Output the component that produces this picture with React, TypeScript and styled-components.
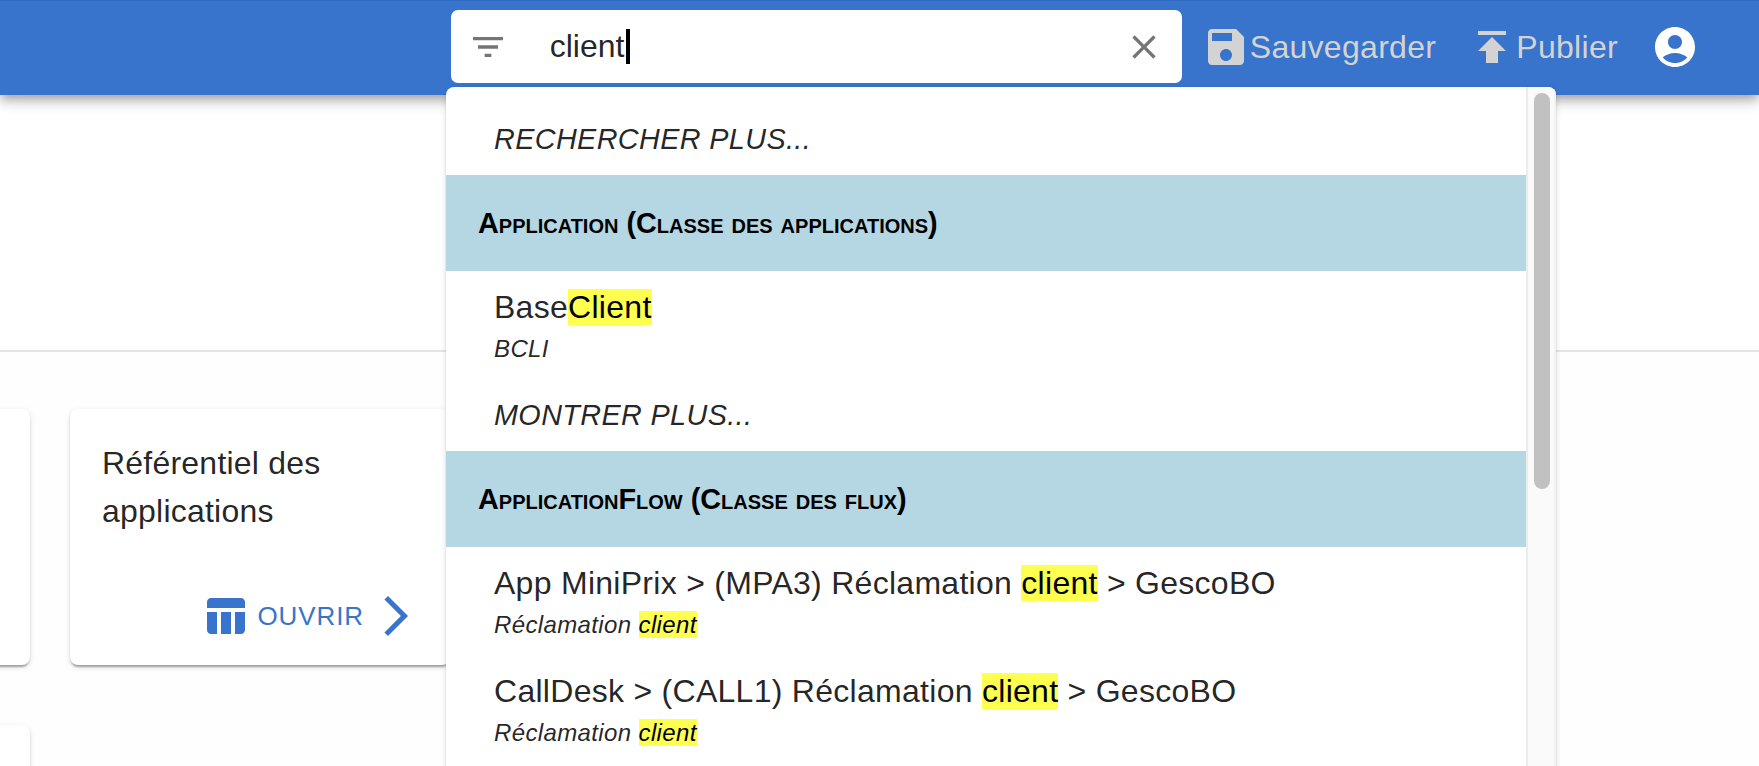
import React from "react";
import styled, { createGlobalStyle } from "styled-components";

const BLUE = "#3874cb";

const GlobalStyle = createGlobalStyle`
  html, body {
    margin: 0;
    height: 100%;
    overflow: hidden;
    background: #fff;
    font-family: "Liberation Sans", Arial, sans-serif;
  }
`;

const Page = styled.div`
  position: relative;
  height: 766px;
  overflow: hidden;
  background: #fff;
`;

const Header = styled.header`
  position: relative;
  z-index: 2;
  box-sizing: border-box;
  height: 95px;
  display: flex;
  align-items: center;
  justify-content: flex-end;
  gap: 32px;
  padding: 0 60px 1px 0;
  background: ${BLUE};
  box-shadow: inset 0 1px 0 #2f69c0, 0 4px 8px -2px rgba(0, 0, 0, 0.2),
    0 8px 10px 0 rgba(0, 0, 0, 0.14), 0 2px 20px 0 rgba(0, 0, 0, 0.12);
`;

const Search = styled.div`
  box-sizing: border-box;
  width: 737px;
  height: 79px;
  margin: 0 -15px 1px 0;
  display: flex;
  align-items: center;
  padding: 0 18px 0 17px;
  background: #fff;
  border: 3px solid ${BLUE};
  border-radius: 10px;
`;

const SearchText = styled.div`
  flex: 1;
  display: flex;
  align-items: center;
  margin-left: 42px;
  font-size: 32px;
  color: rgba(0, 0, 0, 0.87);
`;

const Caret = styled.span`
  width: 3.5px;
  height: 35px;
  margin-left: 2px;
  background: #000;
`;

const Glyph = styled.svg<{ $size: number; $color: string }>`
  flex: none;
  display: block;
  width: ${(p) => p.$size}px;
  height: ${(p) => p.$size}px;
  fill: ${(p) => p.$color};
`;

const Icon = ({ d, size = 48, color }: { d: string; size?: number; color: string }) => (
  <Glyph viewBox="0 0 24 24" $size={size} $color={color}>
    <path d={d} />
  </Glyph>
);

const HeaderAction = styled.div`
  display: flex;
  align-items: center;
  font-size: 32px;
  letter-spacing: 0.3px;
  color: lightgray;
`;

const Account = styled.div`
  margin-left: 1px;
`;

const Body = styled.main`
  position: relative;
`;

const TopPanel = styled.div`
  height: 255px;
  background: #fff;
  border-bottom: 2px solid #e4e4e4;
`;

const CardGrid = styled.div`
  display: flex;
  flex-direction: column;
  gap: 60px;
  margin-left: -350px;
  padding-top: 57px;
  background: #fefefe;
`;

const CardRow = styled.div`
  display: flex;
  gap: 40px;
`;

const Card = styled.div`
  box-sizing: border-box;
  width: 380px;
  height: 256px;
  display: flex;
  flex-direction: column;
  justify-content: space-between;
  padding: 30px 30px 25px 32px;
  background: #fff;
  border-radius: 8px;
  box-shadow: 0 4px 2px -2px rgba(0, 0, 0, 0.2), 0 2px 2px 0 rgba(0, 0, 0, 0.14),
    0 2px 6px 0 rgba(0, 0, 0, 0.12);
`;

const CardTitle = styled.div`
  font-size: 32px;
  line-height: 48px;
  letter-spacing: 0.22px;
  color: rgba(0, 0, 0, 0.87);
`;

const CardActions = styled.div`
  display: flex;
  align-items: center;
  justify-content: flex-end;
`;

const OpenLabel = styled.span`
  margin: 0 8px;
  font-size: 26px;
  letter-spacing: 0.9px;
  color: ${BLUE};
`;

const Dropdown = styled.div`
  position: absolute;
  z-index: 3;
  top: 87px;
  left: 446px;
  width: 1110px;
  height: 720px;
  display: flex;
  overflow: hidden;
  background: #fff;
  border-radius: 8px;
  box-shadow: 0 4px 2px -2px rgba(0, 0, 0, 0.2), 0 2px 2px 0 rgba(0, 0, 0, 0.14),
    0 2px 6px 0 rgba(0, 0, 0, 0.12);
`;

const List = styled.ul`
  flex: 1;
  min-width: 0;
  margin: 0;
  padding: 16px 0 0;
  list-style: none;
`;

const MoreRow = styled.li`
  height: 72px;
  display: flex;
  align-items: center;
  padding-left: 48px;
  font-size: 28.8px;
  font-style: italic;
  letter-spacing: 0.37px;
  text-transform: uppercase;
  color: rgba(0, 0, 0, 0.87);
`;

const GroupRow = styled.li`
  height: 96px;
  display: flex;
  align-items: center;
  padding-left: 32px;
  font-size: 28.8px;
  font-weight: 700;
  font-variant: small-caps;
  color: #000;
  background: #b5d6e3;
`;

const ItemRow = styled.li`
  box-sizing: border-box;
  height: 108px;
  padding: 12px 0 0 48px;
  color: rgba(0, 0, 0, 0.87);
`;

const ItemTitle = styled.div`
  font-size: 32px;
  line-height: 48px;
  letter-spacing: 0.28px;
`;

const ItemSub = styled.div`
  font-size: 24px;
  line-height: 36px;
  font-style: italic;
  letter-spacing: 0.37px;
`;

const Hit = styled.mark`
  background: #ffff50;
  color: #000;
`;

const ScrollTrack = styled.div`
  box-sizing: border-box;
  flex: none;
  width: 30px;
  padding: 6px 4px 0 6px;
  background: #fafafa;
  border-left: 2px solid #ececec;
  border-right: 2px solid #f2f2f2;
`;

const ScrollThumb = styled.div`
  height: 396px;
  background: #c1c1c1;
  border-radius: 8px;
`;

const icons = {
  filter: "M10 18h4v-2h-4v2zM3 6v2h18V6H3zm3 7h12v-2H6v2z",
  clear:
    "M19 6.41 17.59 5 12 10.59 6.41 5 5 6.41 10.59 12 5 17.59 6.41 19 12 13.41 17.59 19 19 17.59 13.41 12z",
  save: "M17 3H5c-1.11 0-2 .9-2 2v14c0 1.1.89 2 2 2h14c1.1 0 2-.9 2-2V7l-4-4zm-5 16c-1.66 0-3-1.34-3-3s1.34-3 3-3 3 1.34 3 3-1.34 3-3 3zm3-10H5V5h10v4z",
  publish: "M5 4v2h14V4H5zm0 10h4v6h6v-6h4l-7-7-7 7z",
  account:
    "M12 2C6.48 2 2 6.48 2 12s4.48 10 10 10 10-4.48 10-10S17.52 2 12 2zm0 4c1.93 0 3.5 1.57 3.5 3.5S13.93 13 12 13s-3.5-1.57-3.5-3.5S10.07 6 12 6zm0 14c-2.03 0-4.43-.82-6.14-2.88C7.55 15.8 9.68 15 12 15s4.45.8 6.14 2.12C16.43 19.18 14.03 20 12 20z",
  table:
    "M10 10.02h5V21h-5zM17 21h3c1.1 0 2-.9 2-2v-9h-5v11zm3-18H5c-1.1 0-2 .9-2 2v3h19V5c0-1.1-.9-2-2-2zM3 19c0 1.1.9 2 2 2h3V10H3v9z",
  next: "M6.23 20.23 8 22l10-10L8 2 6.23 3.77 14.46 12z",
};

const App = () => (
  <Page>
    <GlobalStyle />
    <Header>
      <Search>
        <Icon d={icons.filter} size={40} color="#757575" />
        <SearchText>
          client
          <Caret />
        </SearchText>
        <Icon d={icons.clear} size={40} color="#757575" />
      </Search>
      <HeaderAction>
        <Icon d={icons.save} color="lightgray" />
        Sauvegarder
      </HeaderAction>
      <HeaderAction>
        <Icon d={icons.publish} color="lightgray" />
        Publier
      </HeaderAction>
      <Account>
        <Icon d={icons.account} color="#fff" />
      </Account>
    </Header>

    <Body>
      <TopPanel />
      <CardGrid>
        <CardRow>
          <Card />
          <Card>
            <CardTitle>Référentiel des applications</CardTitle>
            <CardActions>
              <Icon d={icons.table} color={BLUE} />
              <OpenLabel>OUVRIR</OpenLabel>
              <Icon d={icons.next} color={BLUE} />
            </CardActions>
          </Card>
        </CardRow>
        <CardRow>
          <Card />
        </CardRow>
      </CardGrid>
    </Body>

    <Dropdown>
      <List>
        <MoreRow>Rechercher plus...</MoreRow>
        <GroupRow>Application (Classe des applications)</GroupRow>
        <ItemRow>
          <ItemTitle>
            Base<Hit>Client</Hit>
          </ItemTitle>
          <ItemSub>BCLI</ItemSub>
        </ItemRow>
        <MoreRow>Montrer plus...</MoreRow>
        <GroupRow>ApplicationFlow (Classe des flux)</GroupRow>
        <ItemRow>
          <ItemTitle>
            App MiniPrix &gt; (MPA3) Réclamation <Hit>client</Hit> &gt; GescoBO
          </ItemTitle>
          <ItemSub>
            Réclamation <Hit>client</Hit>
          </ItemSub>
        </ItemRow>
        <ItemRow>
          <ItemTitle>
            CallDesk &gt; (CALL1) Réclamation <Hit>client</Hit> &gt; GescoBO
          </ItemTitle>
          <ItemSub>
            Réclamation <Hit>client</Hit>
          </ItemSub>
        </ItemRow>
      </List>
      <ScrollTrack>
        <ScrollThumb />
      </ScrollTrack>
    </Dropdown>
  </Page>
);

export default App;
